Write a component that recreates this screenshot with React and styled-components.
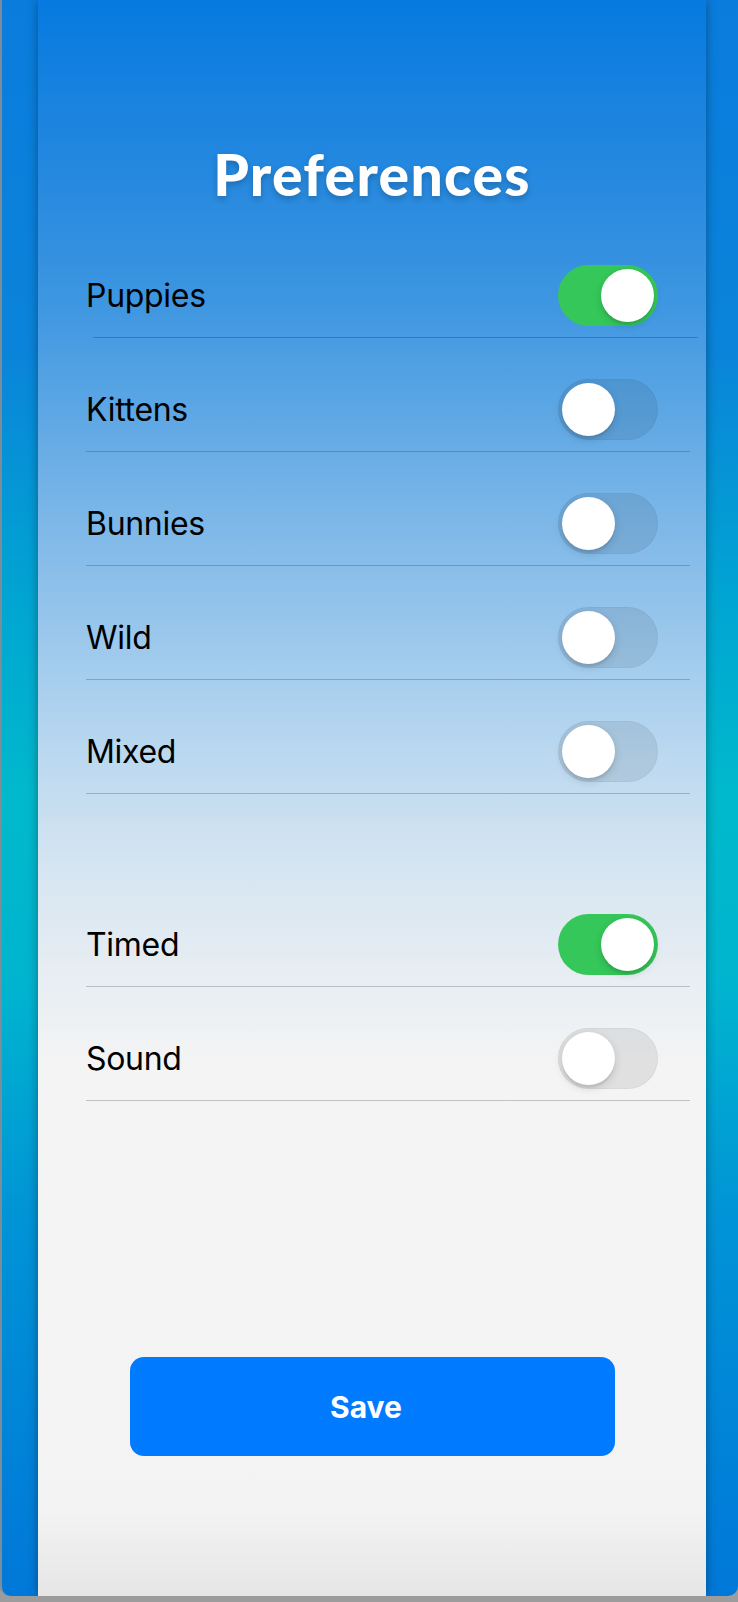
import React, { useState } from 'react';
import styled, { createGlobalStyle } from 'styled-components';

const GlobalStyle = createGlobalStyle`
  html, body {
    margin: 0;
    padding: 0;
    background: #9c9c9c;
  }
  body {
    font-family: Inter, "Liberation Sans", sans-serif;
  }
`;

const Desktop = styled.div`
  height: 1596px;
  display: flex;
  padding: 0 32px 0 36px;
  border-left: 2px solid #7d8c99;
  border-radius: 0 0 10px 10px;
  background: linear-gradient(
    to bottom,
    #0a7cdd 0%,
    #0a84da 22%,
    #00a6d2 38%,
    #00b9cc 50%,
    #00b4cf 62%,
    #0094d6 76%,
    #0078d9 100%
  );
  box-sizing: border-box;
`;

const Panel = styled.div`
  flex: 1;
  display: flex;
  flex-direction: column;
  box-shadow: 0 0 10px rgba(0, 0, 0, 0.35);
  background: linear-gradient(
    to bottom,
    #067ae0 0px,
    #2a8bdf 200px,
    #3d96e1 300px,
    #7cb7e8 520px,
    #bcd9f0 760px,
    #d8e6f1 880px,
    #e8eef3 980px,
    #f4f4f4 1070px,
    #f3f3f3 1510px,
    #e6e6e6 1596px
  );
`;

const Title = styled.h1`
  margin: 0;
  padding-top: 146px;
  height: 78px;
  box-sizing: content-box;
  font-family: Lato, "Open Sans", sans-serif;
  font-weight: 900;
  font-size: 57px;
  letter-spacing: 1.3px;
  line-height: 1;
  text-align: center;
  color: #fff;
  text-shadow: 0 3px 6px rgba(0, 0, 0, 0.22);
`;

const List = styled.div`
  display: flex;
  flex-direction: column;
  padding: 0 16px 0 48px;
`;

const Row = styled.div`
  display: flex;
  align-items: center;
  justify-content: space-between;
  padding: 41px 32px 11px 0;
`;

const Label = styled.span`
  font-family: Inter, "Liberation Sans", sans-serif;
  font-size: 32px;
  font-weight: 400;
  color: #000;
  letter-spacing: -0.3px;
`;

const Rule = styled.div`
  height: 1px;
  background: rgba(0, 0, 0, 0.2);
  margin-left: ${(p) => (p.$shift ? '7px' : '0')};
  margin-right: ${(p) => (p.$shift ? '-8px' : '0')};
`;

const Spacer = styled.div`
  height: 79px;
`;

const Track = styled.button`
  display: flex;
  justify-content: ${(p) => (p.$on ? 'flex-end' : 'flex-start')};
  align-items: center;
  width: 100px;
  height: 61px;
  padding: 4px;
  box-sizing: border-box;
  border: 0;
  border-radius: 31px;
  cursor: pointer;
  background: ${(p) => (p.$on ? '#35c759' : 'rgba(0, 0, 0, 0.08)')};
  box-shadow: ${(p) => (p.$on ? 'none' : 'inset 0 0 0 1px rgba(0, 0, 0, 0.03)')};
`;

const Knob = styled.span`
  width: 53px;
  height: 53px;
  border-radius: 50%;
  background: #fff;
  box-shadow: 0 3px 8px rgba(0, 0, 0, 0.15), 0 3px 1px rgba(0, 0, 0, 0.06);
`;

const Footer = styled.div`
  display: flex;
  justify-content: center;
  padding-top: 256px;
`;

const SaveButton = styled.button`
  width: 485px;
  height: 99px;
  border: 0;
  border-radius: 14px;
  background: #007aff;
  color: #fff;
  font-family: Inter, "Liberation Sans", sans-serif;
  font-weight: 700;
  font-size: 30px;
  padding-right: 18px;
  cursor: pointer;
`;

const Toggle = ({ on, onChange }) => (
  <Track $on={on} onClick={onChange} aria-pressed={on}>
    <Knob />
  </Track>
);

const groups = [
  ['Puppies', 'Kittens', 'Bunnies', 'Wild', 'Mixed'],
  ['Timed', 'Sound'],
];

export default function App() {
  const [prefs, setPrefs] = useState({
    Puppies: true,
    Kittens: false,
    Bunnies: false,
    Wild: false,
    Mixed: false,
    Timed: true,
    Sound: false,
  });

  const flip = (key) => setPrefs({ ...prefs, [key]: !prefs[key] });

  return (
    <>
      <GlobalStyle />
      <Desktop>
        <Panel>
          <Title>Preferences</Title>
          {groups.map((group, gi) => (
            <React.Fragment key={gi}>
              {gi > 0 && <Spacer />}
              <List>
                {group.map((name, i) => (
                  <React.Fragment key={name}>
                    <Row>
                      <Label>{name}</Label>
                      <Toggle on={prefs[name]} onChange={() => flip(name)} />
                    </Row>
                    <Rule $shift={gi === 0 && i === 0} />
                  </React.Fragment>
                ))}
              </List>
            </React.Fragment>
          ))}
          <Footer>
            <SaveButton>Save</SaveButton>
          </Footer>
        </Panel>
      </Desktop>
    </>
  );
}
